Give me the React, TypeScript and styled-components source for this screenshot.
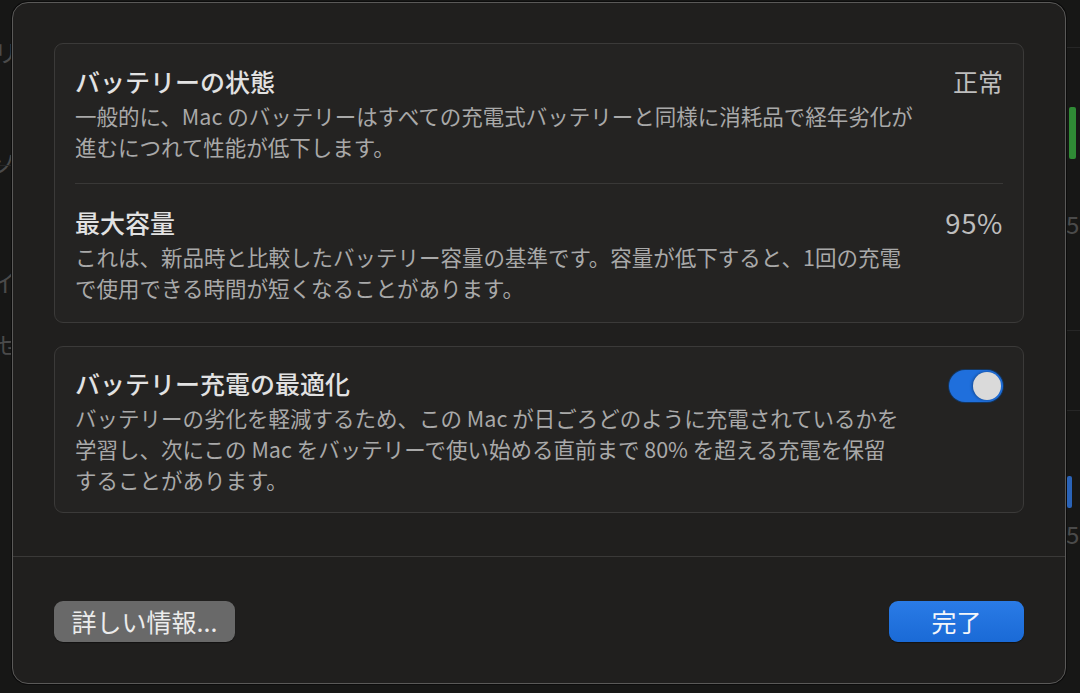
import React from "react";
import styled, { createGlobalStyle } from "styled-components";

const GlobalStyle = createGlobalStyle`
  html, body {
    margin: 0;
    padding: 0;
    background: #161616;
  }
  body {
    font-family: "Noto Sans CJK JP", "Noto Sans", sans-serif;
    -webkit-font-smoothing: antialiased;
  }
  * { box-sizing: border-box; }
`;

const Screen = styled.div`
  position: relative;
  width: 1080px;
  height: 693px;
  overflow: hidden;
  background: #171716;
  padding: 2px 0 0 12px;
`;

const BackBar = styled.div<{ $color: string }>`
  position: absolute;
  background: ${(p) => p.$color};
  border-radius: 2px;
`;

const BackGlyph = styled.span`
  position: absolute;
  font-size: 24px;
  color: #4a4a4a;
  line-height: 1;
`;

const BackLine = styled.div`
  position: absolute;
  height: 1px;
  background: #262626;
`;

const Dialog = styled.div`
  position: relative;
  z-index: 1;
  width: 1054px;
  height: 682px;
  border: 1px solid #5a5958;
  border-radius: 16px;
  background: #201f1e;
  display: flex;
  flex-direction: column;
  box-shadow: 0 0 0 1px #0c0c0c;
`;

const Body = styled.div`
  flex: 1;
  padding: 40px 41px 0;
  display: flex;
  flex-direction: column;
  gap: 23px;
`;

const Panel = styled.section`
  border: 1px solid #3b3a39;
  border-radius: 9px;
  background: #242322;
  padding: 0 20px;
`;

const Row = styled.div<{ $pt: number; $pb: number; $divider?: boolean }>`
  display: flex;
  justify-content: space-between;
  align-items: flex-start;
  gap: 24px;
  padding: ${(p) => p.$pt}px 0 ${(p) => p.$pb}px;
  border-top: ${(p) => (p.$divider ? "1px solid #393837" : "none")};
`;

const TextBlock = styled.div`
  flex: 1;
  min-width: 0;
`;

const Title = styled.div`
  font-size: 25px;
  line-height: 36px;
  font-weight: 500;
  color: #e2e2e2;
  white-space: nowrap;
`;

const Description = styled.div`
  margin-top: 1px;
  font-size: 21.5px;
  line-height: 31px;
  color: #a9a9a9;
  white-space: nowrap;
`;

const Value = styled.div<{ $latin?: boolean }>`
  font-size: ${(p) => (p.$latin ? 27.5 : 25)}px;
  letter-spacing: ${(p) => (p.$latin ? 0.6 : 0)}px;
  line-height: 36px;
  color: #bdbdbd;
  white-space: nowrap;
`;

const Switch = styled.div<{ $on: boolean }>`
  flex: none;
  margin-top: 5px;
  width: 54px;
  height: 32px;
  border-radius: 16px;
  background: ${(p) => (p.$on ? "#1f6fdc" : "#444")};
  box-shadow: 0 0 0 1px #14365f;
  display: flex;
  align-items: center;
  justify-content: ${(p) => (p.$on ? "flex-end" : "flex-start")};
  padding: 0 2px;
`;

const Knob = styled.div`
  width: 28px;
  height: 28px;
  border-radius: 50%;
  background: #dadada;
  box-shadow: -1px 0 3px rgba(0, 0, 0, 0.35);
`;

const Footer = styled.footer`
  border-top: 1px solid #3a3938;
  padding: 44px 41px 41px;
  display: flex;
  justify-content: space-between;
  align-items: center;
`;

const Button = styled.button<{ $primary?: boolean; $width: number }>`
  width: ${(p) => p.$width}px;
  height: 41px;
  border: none;
  border-radius: 9px;
  font-family: "Noto Sans CJK JP", "Noto Sans", sans-serif;
  font-size: 25px;
  line-height: 41px;
  padding: 0;
  color: ${(p) => (p.$primary ? "#f4f6fa" : "#ececec")};
  background: ${(p) =>
    p.$primary ? "linear-gradient(#2a7be6, #1a6ad6)" : "#696969"};
  box-shadow: 0 1px 1px rgba(0, 0, 0, 0.4);
  text-align: center;
  cursor: default;
`;

export default function App() {
  return (
    <>
      <GlobalStyle />
      <Screen>
        <BackGlyph style={{ left: -6, top: 40 }}>リ</BackGlyph>
        <BackGlyph style={{ left: -8, top: 150 }}>ソ</BackGlyph>
        <BackGlyph style={{ left: -8, top: 270 }}>イ</BackGlyph>
        <BackGlyph style={{ left: -4, top: 332 }}>せ</BackGlyph>
        <BackGlyph style={{ left: 1066, top: 212 }}>5</BackGlyph>
        <BackGlyph style={{ left: 1066, top: 522 }}>5</BackGlyph>
        <BackLine style={{ left: 1066, width: 14, top: 47 }} />
        <BackLine style={{ left: 1066, width: 14, top: 330 }} />
        <BackLine style={{ left: 1066, width: 14, top: 410 }} />
        <BackLine style={{ left: 0, width: 12, top: 165 }} />
        <BackBar $color="#2f8a35" style={{ left: 1069, top: 107, width: 7, height: 52 }} />
        <BackBar $color="#2a63b8" style={{ left: 1067, top: 476, width: 5, height: 32 }} />
        <Dialog>
          <Body>
            <Panel>
              <Row $pt={19} $pb={21}>
                <TextBlock>
                  <Title>バッテリーの状態</Title>
                  <Description>
                    一般的に、Mac のバッテリーはすべての充電式バッテリーと同様に消耗品で経年劣化が
                    <br />
                    進むにつれて性能が低下します。
                  </Description>
                </TextBlock>
                <Value>正常</Value>
              </Row>
              <Row $pt={20} $pb={19} $divider>
                <TextBlock>
                  <Title>最大容量</Title>
                  <Description>
                    これは、新品時と比較したバッテリー容量の基準です。容量が低下すると、1回の充電
                    <br />
                    で使用できる時間が短くなることがあります。
                  </Description>
                </TextBlock>
                <Value $latin>95%</Value>
              </Row>
            </Panel>
            <Panel>
              <Row $pt={18} $pb={17}>
                <TextBlock>
                  <Title>バッテリー充電の最適化</Title>
                  <Description>
                    バッテリーの劣化を軽減するため、この Mac が日ごろどのように充電されているかを
                    <br />
                    学習し、次にこの Mac をバッテリーで使い始める直前まで 80% を超える充電を保留
                    <br />
                    することがあります。
                  </Description>
                </TextBlock>
                <Switch $on>
                  <Knob />
                </Switch>
              </Row>
            </Panel>
          </Body>
          <Footer>
            <Button $width={181}>詳しい情報...</Button>
            <Button $primary $width={135}>
              完了
            </Button>
          </Footer>
        </Dialog>
      </Screen>
    </>
  );
}
